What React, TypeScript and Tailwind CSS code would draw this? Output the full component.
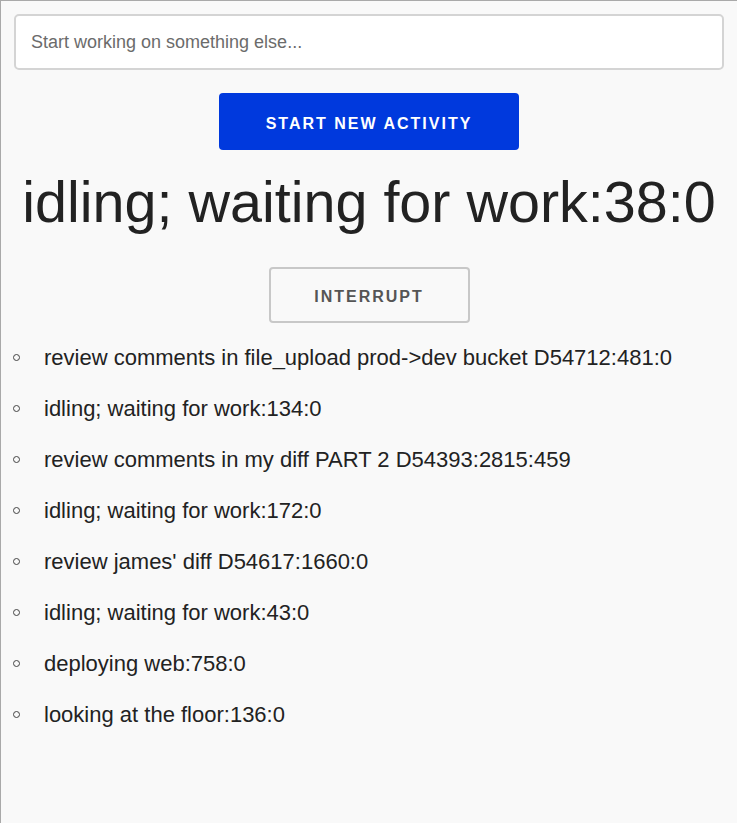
const history = [
  "review comments in file_upload prod->dev bucket D54712:481:0",
  "idling; waiting for work:134:0",
  "review comments in my diff PART 2 D54393:2815:459",
  "idling; waiting for work:172:0",
  "review james' diff D54617:1660:0",
  "idling; waiting for work:43:0",
  "deploying web:758:0",
  "looking at the floor:136:0",
];

export default function App() {
  return (
    <div className="min-h-[823px] bg-[#f9f9f9] border-l border-t border-[#a9a9a9] font-['Liberation_Sans',Arial,sans-serif] text-[#222]">
      <div className="px-[13px] pt-[13px]">
        <input
          type="text"
          placeholder="Start working on something else..."
          className="w-full h-[56px] bg-white border-2 border-[#d4d4d4] rounded-[5px] px-[15px] text-[18px] text-[#333] placeholder:text-[#6b6b6b] outline-none"
        />
      </div>

      <div className="flex justify-center mt-[23px]">
        <button className="w-[300px] h-[57px] pt-[5px] bg-[#0039dd] rounded-[4px] text-white text-[16px] font-bold tracking-[2px] uppercase">
          Start new activity
        </button>
      </div>

      <h1 className="text-center text-[57.5px] leading-[66px] mt-[19px] text-[#222]">
        idling; waiting for work:38:0
      </h1>

      <div className="flex justify-center mt-[32px]">
        <button className="w-[201px] h-[56px] pt-[3px] bg-transparent border-2 border-[#c8c8c8] rounded-[4px] text-[#555] text-[16px] font-bold tracking-[2px] uppercase">
          Interrupt
        </button>
      </div>

      <ul className="mt-[9px]">
        {history.map((item, i) => (
          <li key={i} className="flex items-center h-[51px]">
            <span className="ml-[12px] w-[7px] h-[7px] rounded-full border border-[#444]" />
            <span className="ml-[24px] text-[22px]">{item}</span>
          </li>
        ))}
      </ul>
    </div>
  );
}
